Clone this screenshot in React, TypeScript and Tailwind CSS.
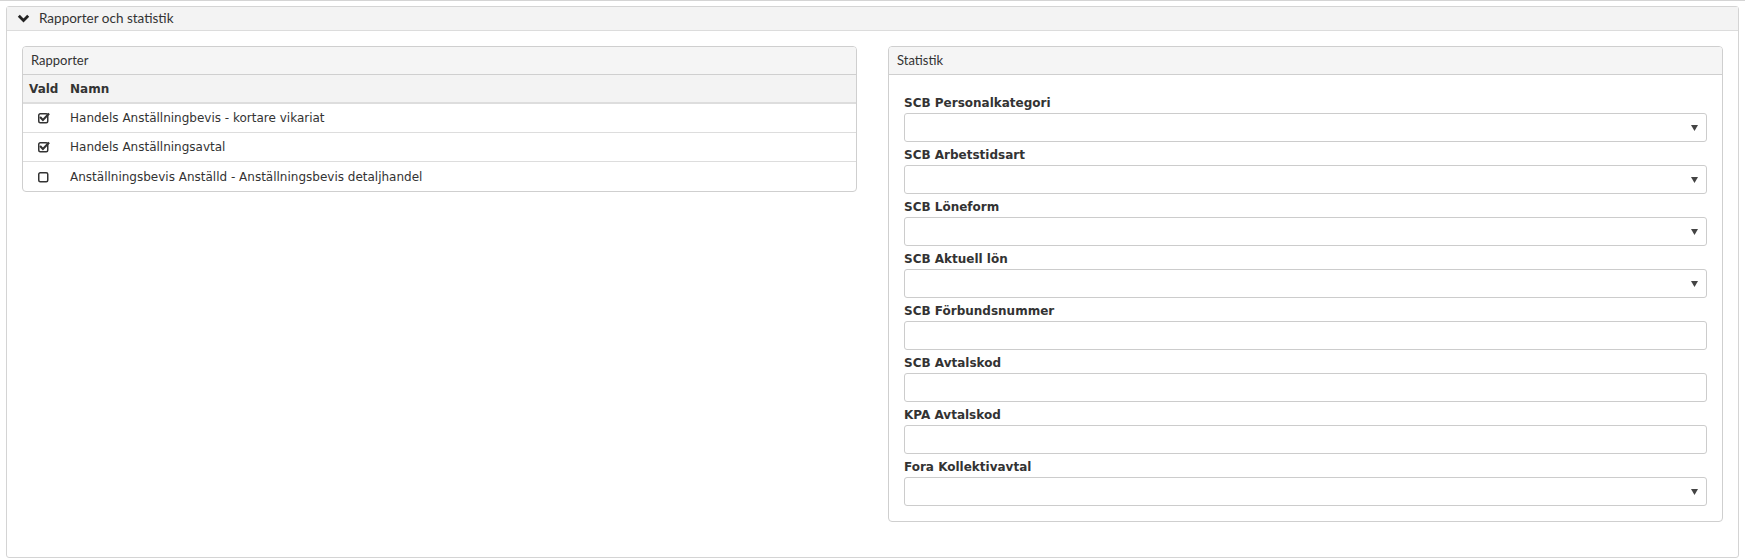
import React from 'react';

const reports = [
  { name: 'Handels Anställningbevis - kortare vikariat', checked: true },
  { name: 'Handels Anställningsavtal', checked: true },
  { name: 'Anställningsbevis Anställd - Anställningsbevis detaljhandel', checked: false },
];

const fields = [
  { label: 'SCB Personalkategori', select: true },
  { label: 'SCB Arbetstidsart', select: true },
  { label: 'SCB Löneform', select: true },
  { label: 'SCB Aktuell lön', select: true },
  { label: 'SCB Förbundsnummer', select: false },
  { label: 'SCB Avtalskod', select: false },
  { label: 'KPA Avtalskod', select: false },
  { label: 'Fora Kollektivavtal', select: true },
];

const verdana = { fontFamily: "'DejaVu Sans', Verdana, sans-serif" };
const ui = { fontFamily: "Lato, 'Segoe UI', sans-serif" };

const CheckIcon: React.FC<{ checked: boolean }> = ({ checked }) => (
  <svg width="12" height="12" viewBox="0 0 12 12" className="block">
    <rect x="0.75" y="1.75" width="9" height="9" rx="1.5" fill="none" stroke="#333" strokeWidth="1.5" />
    {checked && (
      <path d="M2.8 5.8 L4.9 7.9 L10.4 2.2" fill="none" stroke="#333" strokeWidth="2.1" strokeLinecap="square" />
    )}
  </svg>
);

const App: React.FC = () => {
  return (
    <div className="w-[1745px] h-[559px] bg-white text-[#333] overflow-hidden">
      <div className="h-px bg-[#d4d4d4]" />
      <div className="mx-[6px] mt-[5px] border border-[#d4d4d4] rounded-[3px] h-[552px] flex flex-col">
        {/* Section header */}
        <div className="h-[24px] bg-[#f3f3f3] border-b border-[#dcdcdc] flex items-center pl-[10px] gap-[9px] shrink-0">
          <svg width="13" height="9" viewBox="0 0 13 9" className="block">
            <polyline points="1.8,1.8 6.5,6.5 11.2,1.8" fill="none" stroke="#222" strokeWidth="2.8" />
          </svg>
          <span className="text-[13.5px] leading-none text-[#333]" style={ui}>
            Rapporter och statistik
          </span>
        </div>

        <div className="grid grid-cols-2 gap-[31px] px-[15px] pt-[15px]">
          {/* Rapporter */}
          <div className="self-start border border-[#cfcfcf] rounded-[4px] overflow-hidden">
            <div className="h-[28px] bg-[#f5f5f5] border-b border-[#cfcfcf] flex items-center pl-[8px] text-[13px]" style={ui}>
              Rapporter
            </div>
            <div className="h-[29px] bg-[#f3f3f3] border-b-2 border-[#dddddd] flex items-center text-[12px] font-bold" style={verdana}>
              <div className="w-[47px] pl-[6px]">Vald</div>
              <div>Namn</div>
            </div>
            {reports.map((r, i) => (
              <div
                key={r.name}
                className={`h-[29px] flex items-center text-[12px] ${i < reports.length - 1 ? 'border-b border-[#dddddd]' : ''}`}
                style={verdana}
              >
                <div className="w-[47px] pl-[15px]">
                  <CheckIcon checked={r.checked} />
                </div>
                <div>{r.name}</div>
              </div>
            ))}
          </div>

          {/* Statistik */}
          <div className="border border-[#cfcfcf] rounded-[4px] overflow-hidden">
            <div className="h-[28px] bg-[#f5f5f5] border-b border-[#cfcfcf] flex items-center pl-[8px] text-[13px]" style={ui}>
              Statistik
            </div>
            <div className="px-[15px] pt-[15px] pb-[15px] flex flex-col">
              {fields.map((f) => (
                <div key={f.label} className="flex flex-col">
                  <div className="h-[23px] flex items-end pb-[1px] text-[12px] font-bold text-[#333]" style={verdana}>
                    {f.label}
                  </div>
                  <div className="h-[29px] border border-[#cccccc] rounded-[3px] bg-white flex items-center justify-end pr-[8px]">
                    {f.select && (
                      <svg width="7" height="6" viewBox="0 0 7 6" className="block">
                        <polygon points="0,0 7,0 3.5,6" fill="#444" />
                      </svg>
                    )}
                  </div>
                </div>
              ))}
            </div>
          </div>
        </div>
      </div>
    </div>
  );
};

export default App;
